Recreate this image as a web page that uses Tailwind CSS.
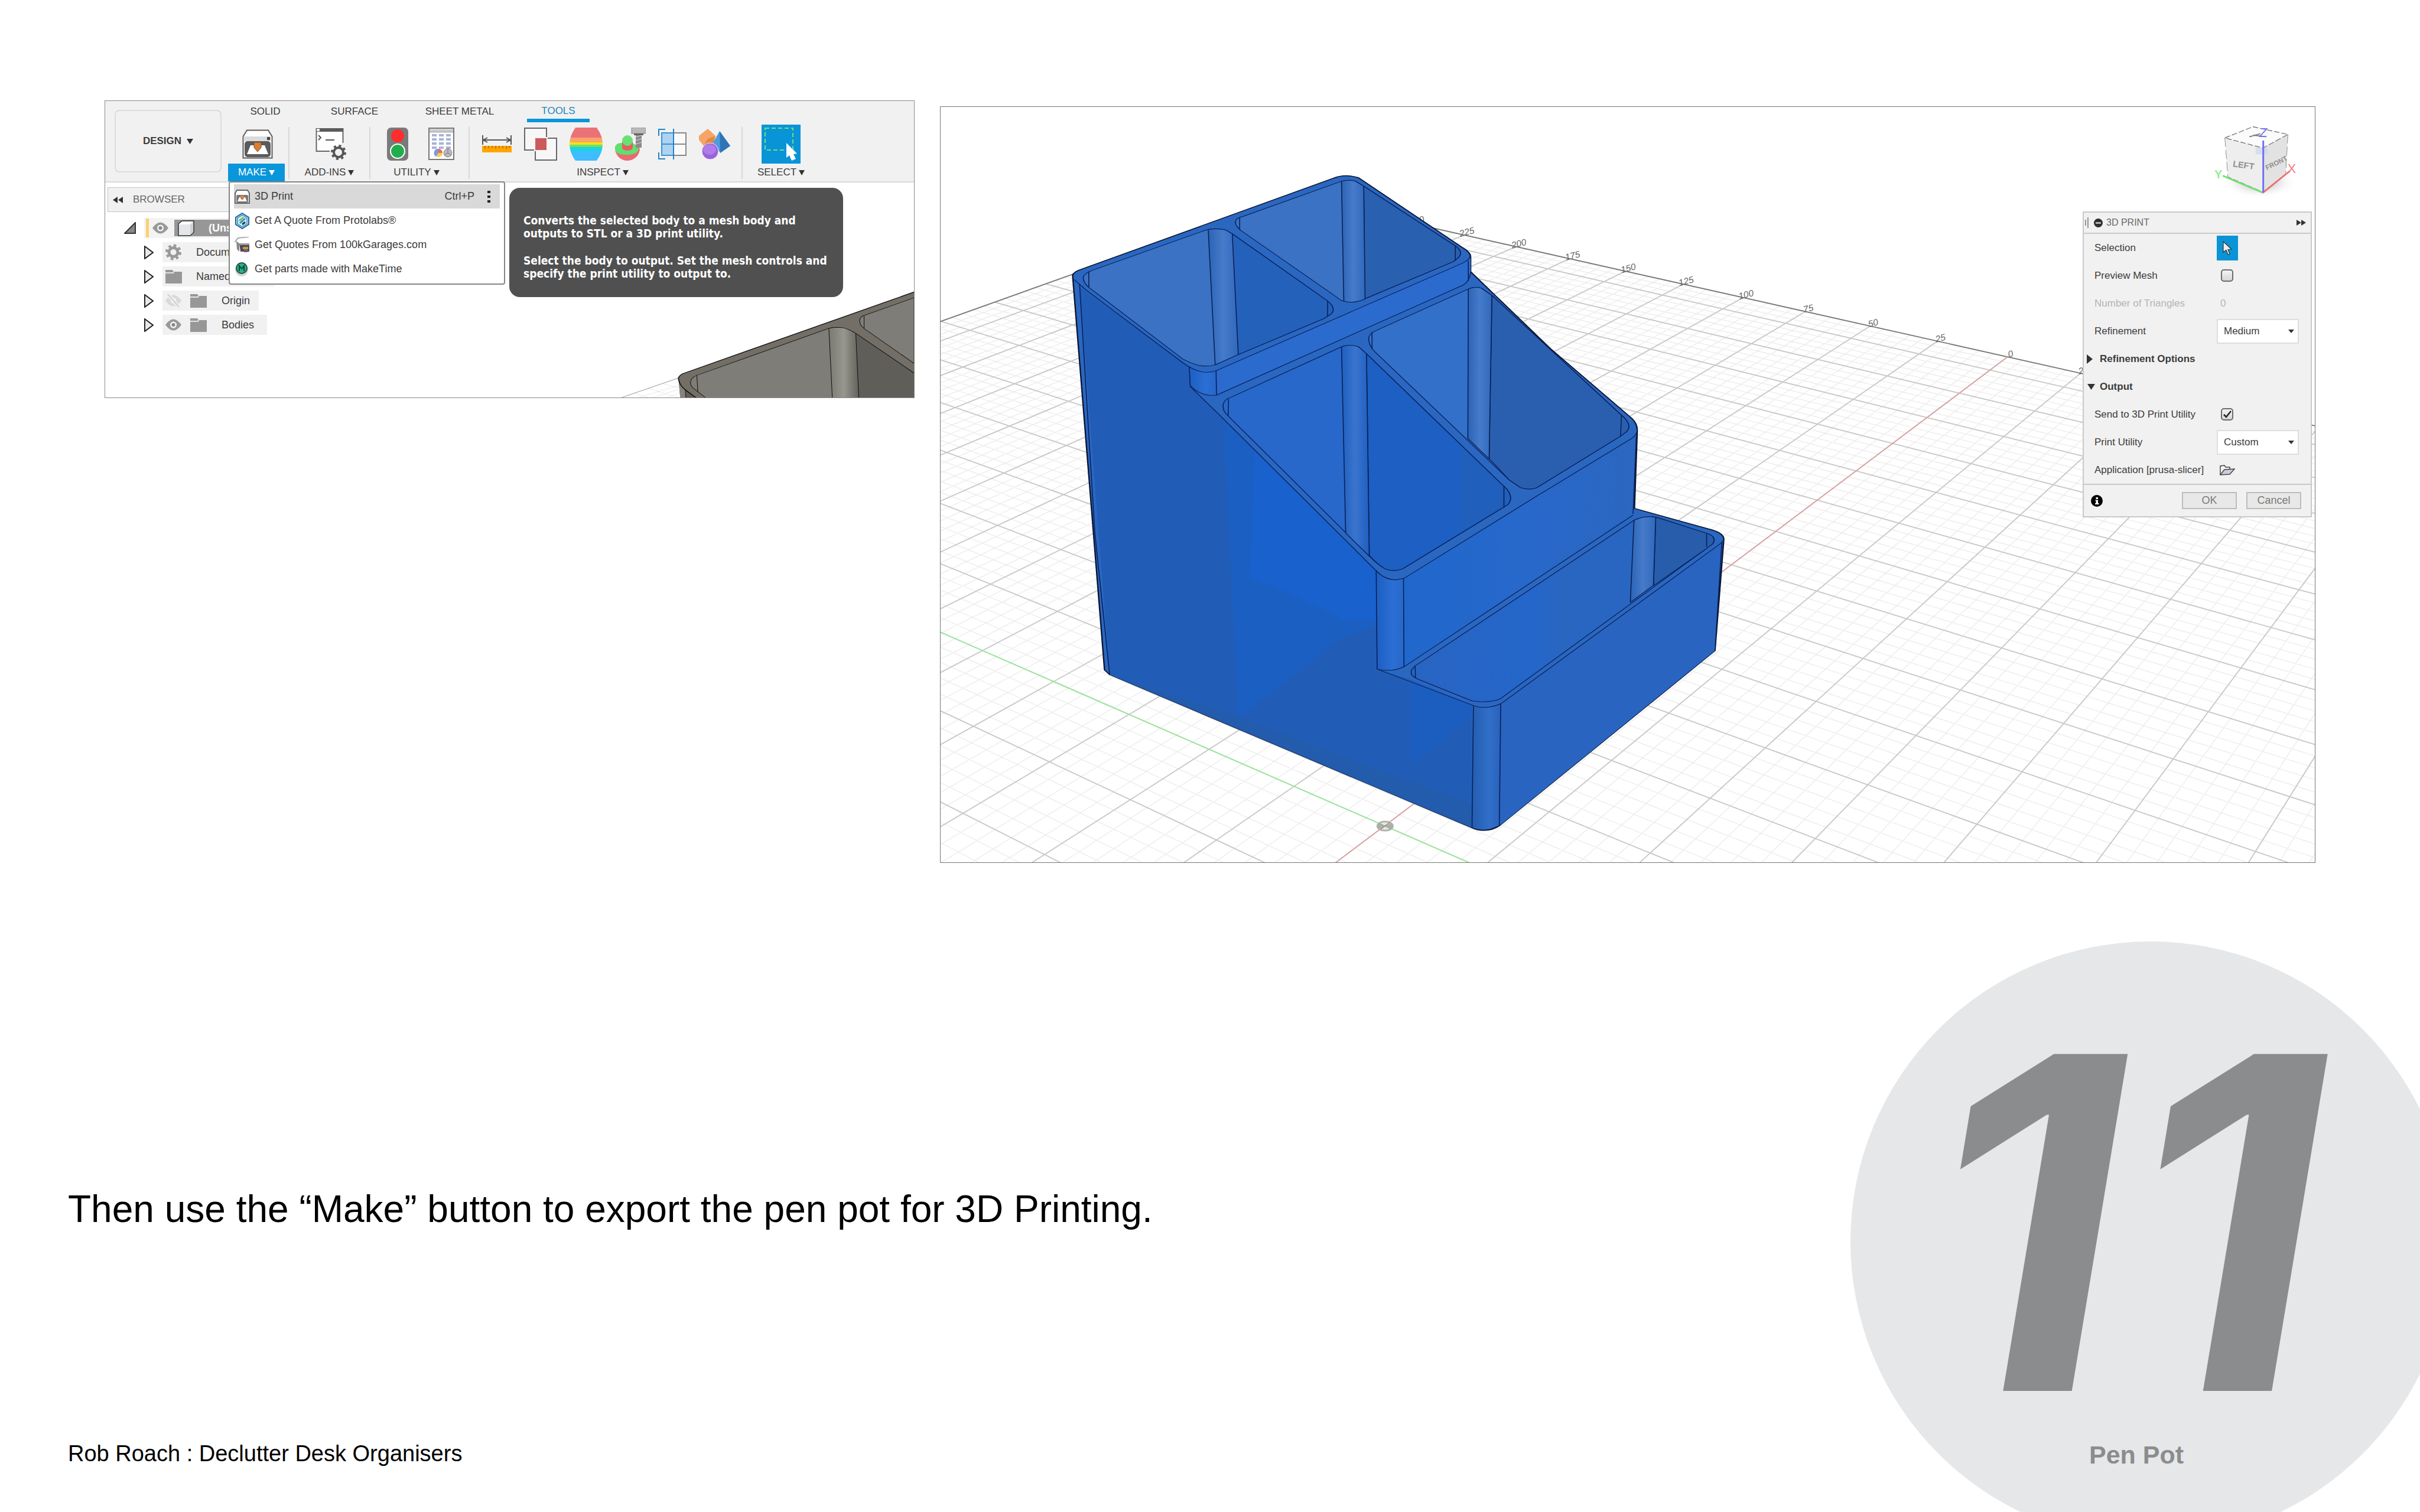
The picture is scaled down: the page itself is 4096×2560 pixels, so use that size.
<!DOCTYPE html>
<html lang="en">
<head>
  <meta charset="UTF-8" />
  <meta name="viewport" content="width=device-width, initial-scale=1.0" />
  <title>Declutter Desk Organisers - Pen Pot</title>
  <script src="https://cdn.jsdelivr.net/npm/@tailwindcss/browser@4"></script>
</head>
<body class="bg-white text-black font-['Liberation_Sans',sans-serif]">
  <div class="relative min-h-screen flex flex-col overflow-hidden">

    <!-- Step number -->
    <div class="absolute -right-[52px] -bottom-[50px] size-[1016px] rounded-full bg-[#e6e7e9] text-[#8b8c8e] flex flex-col items-center pt-[126px] pr-[48px]">
      <div class="pr-[44px] font-['Inter',sans-serif] font-bold italic text-[784px] leading-[700px]">11</div>
      <div class="mt-[19px] text-[43px] leading-[48px] font-bold">Pen Pot</div>
    </div>

    <main class="relative flex items-start gap-[43px] px-[177px] pt-[170px]">

      <!-- Make menu -->
      <section class="relative flex-[1370] min-w-0 aspect-[1370/504] border border-[#8a8a8a] overflow-hidden bg-white text-[#3c3c3c]">
        <svg class="absolute inset-0 size-full" viewBox="232 221 1783 656" preserveAspectRatio="none">
          <defs>
            <linearGradient id="greyPost">
              <stop offset="0" stop-color="#7b7970" /><stop offset=".5" stop-color="#96978f" /><stop offset="1" stop-color="#62615b" />
            </linearGradient>
          </defs>
          <g transform="translate(1340 600) scale(.4464 .3333)" stroke="#111" stroke-width="3" stroke-linejoin="round">
            <path d="M200 770L350 832M270 738L355 768M130 802L200 832M150 832L350 750M220 832L352 775M290 832L354 802" fill="none" stroke="#d8d8d8" stroke-width="2" />
            <path d="M65 832L350 700" fill="none" stroke="#888" />
            <path d="M1513 130L370 672Q345 690 350 712L358 832H1513Z" fill="#736f66" stroke="none" />
            <path d="M350 712Q355 750 382 778L436 832H358Z" fill="#85847c" stroke="none" />
            <path d="M383 780L386 832H436Z" fill="#5f5e58" />
            <path d="M484 832L420 765Q400 735 415 705Q425 690 442 682L1088 373Q1115 360 1160 367Q1190 375 1225 405L1513 668V832Z" fill="#7e7d77" />
            <path d="M1225 405L1513 668V832H1240Z" fill="#5f5e58" stroke="none" />
            <path d="M1092 372Q1115 362 1160 367Q1190 375 1225 405L1240 832H1109Z" fill="url(#greyPost)" />
            <path d="M1225 405L1513 668" fill="none" />
            <path d="M1513 168L1262 288Q1240 300 1245 330Q1248 355 1268 374L1513 604Z" fill="#7e7d77" />
            <path d="M1266 288V372M440 682L445 795" fill="none" />
            <path d="M1513 130L370 672Q345 690 350 712Q355 750 382 778L436 832" fill="none" stroke-width="5" />
          </g>
        </svg>

        <!-- Toolbar -->
        <header class="relative h-[138px] flex bg-[#f1f1f1] border-b-2 border-[#d9d9d9] pl-[16px]">
          <button class="mt-[15px] w-[181px] h-[106px] shrink-0 rounded-lg border-2 border-[#dcdcdc] text-[17px] font-bold flex items-center justify-center gap-[9px]">DESIGN
            <svg width="11" height="9" viewBox="0 0 11 9"><path d="M0 0h11L5.500 9z" fill="#333" /></svg>
          </button>
          <div class="ml-[11px]">
            <nav class="flex h-[36px] text-[17px] leading-[34px]">
              <button class="w-[126px]">SOLID</button>
              <button class="w-[176px]">SURFACE</button>
              <button class="w-[180px]">SHEET METAL</button>
              <button class="ml-[24px] w-[106px] text-[#1a87c0] border-b-6 border-[#0a96da] leading-[34px] h-[36px]">TOOLS</button>
            </nav>
            <div class="flex mt-[3px] text-[17px] leading-[30px]">
              <div class="w-[96px]">
                <div class="h-[67px] flex items-center justify-center pl-[4px]">
                  <svg width="52" height="50" viewBox="0 0 52 50">
                    <path d="M8 1.500H44L50.500 12V48.500H1.500V12Z" fill="#fff" stroke="#5c5c5c" stroke-width="2" />
                    <path d="M2.500 12H49.500V20H2.500Z" fill="#dcdcdc" /><rect x="42" y="13" width="5" height="5" fill="#444" />
                    <rect x="4" y="20" width="44" height="27" rx="5" fill="#5b5b5b" />
                    <path d="M8 42L14 27H38L44 42Z" fill="#fff" />
                    <path d="M20 22H32V31L26 38L20 31Z" fill="#e07b2a" stroke="#5b5b5b" stroke-width="1" />
                  </svg>
                </div>
                <button class="w-full h-[30px] bg-[#0a96da] text-white flex items-center justify-center gap-[4px]">MAKE
                  <svg width="10" height="9" viewBox="0 0 10 9"><path d="M0 0h10L5 9z" fill="#fff" /></svg>
                </button>
              </div>
              <div class="w-[2px] h-[88px] mt-[5px] mx-[6px] bg-[#d8d8d8]"></div>
              <div class="w-[123px]">
                <div class="h-[67px] flex items-center justify-center pl-[4px]">
                  <svg width="52" height="55" viewBox="0 0 52 55" fill="none">
                    <path d="M24 40H1.500V2H46.500V26" fill="#fff" stroke="#666" stroke-width="2" />
                    <rect x="1" y="1" width="46" height="6" fill="#5c5c5c" /><rect x="2" y="2" width="5" height="4" fill="#eee" />
                    <path d="M5 13L9 17L5 21M17 21H32" stroke="#555" stroke-width="2" />
                    <circle cx="39" cy="42" r="8" fill="#f1f1f1" stroke="#555" stroke-width="4" />
                    <circle cx="39" cy="42" r="11" stroke="#555" stroke-width="4" stroke-dasharray="4 4.640" />
                  </svg>
                </div>
                <button class="w-full flex items-center justify-center gap-[4px]">ADD-INS
                  <svg width="10" height="9" viewBox="0 0 10 9"><path d="M0 0h10L5 9z" fill="#333" /></svg>
                </button>
              </div>
              <div class="w-[2px] h-[88px] mt-[5px] mx-[6px] bg-[#d8d8d8]"></div>
              <div class="w-[154px]">
                <div class="h-[67px] flex items-center justify-center gap-[34px] pl-[4px]">
                  <svg width="36" height="56" viewBox="0 0 36 56">
                    <rect width="36" height="56" rx="7" fill="#7a7a7a" />
                    <circle cx="18" cy="14" r="11" fill="#ff2d2d" /><circle cx="18" cy="40" r="12" fill="#1fae4b" stroke="#fff" stroke-width="2" />
                  </svg>
                  <svg width="44" height="55" viewBox="0 0 44 55">
                    <rect x="1" y="1" width="42" height="53" fill="#fff" stroke="#777" stroke-width="2" />
                    <path d="M2 4.500H42" stroke="#c9c9c9" stroke-width="4" /><path d="M1 7.500H43" stroke="#777" />
                    <path d="M6 13H38M6 20H38M6 27H38M6 34H38" stroke="#a9b3d6" stroke-width="4" stroke-dasharray="8 4" />
                    <circle cx="17" cy="43" r="7" fill="#f2d34a" /><path d="M17 43V36A7 7 0 0 1 24 43Z" fill="#e66" /><path d="M17 43L13 49A7 7 0 0 1 17 36Z" fill="#7a9be0" />
                    <circle cx="33" cy="43" r="7" fill="#bbb" stroke="#888" /><path d="M33 43V36M33 43L39 47M33 43L27 47" stroke="#777" />
                  </svg>
                </div>
                <button class="w-full flex items-center justify-center gap-[4px] pr-[10px]">UTILITY
                  <svg width="10" height="9" viewBox="0 0 10 9"><path d="M0 0h10L5 9z" fill="#333" /></svg>
                </button>
              </div>
              <div class="w-[2px] h-[88px] mt-[5px] mx-[6px] bg-[#d8d8d8]"></div>
              <div class="w-[448px]">
                <div class="h-[67px] flex items-center justify-between pl-[15px] pr-[12px]">
                  <svg width="50" height="30" viewBox="0 0 50 30" fill="none">
                    <path d="M1 0V16M49 0V16M2 8H48M9 4L2 8L9 12M41 4L48 8L41 12" stroke="#555" stroke-width="2" />
                    <rect y="18" width="50" height="11" fill="#ffa500" />
                    <path d="M5 18V23M11 18V22M17 18V22M23 18V23M29 18V22M35 18V22M41 18V23M46 18V22" stroke="#7a5200" />
                  </svg>
                  <svg width="56" height="56" viewBox="0 0 56 56" fill="none" stroke="#666" stroke-width="2">
                    <rect x="19" y="18" width="36" height="37" fill="#f7f7f7" /><rect x="1" y="1" width="37" height="37" fill="#f7f7f7" />
                    <rect x="18" y="17" width="21" height="22" fill="#cc5a5a" stroke="#f4f4f4" />
                  </svg>
                  <svg width="56" height="56" viewBox="0 0 56 56">
                    <clipPath id="barrel"><path d="M10 0H46Q66 28 46 56H10Q-10 28 10 0Z" /></clipPath>
                    <g clip-path="url(#barrel)">
                      <rect width="56" height="18" fill="#ea7277" /><rect y="17" width="56" height="8" fill="#fca469" />
                      <rect y="25" width="56" height="4" fill="#f5e313" /><rect y="29" width="56" height="4" fill="#6be06b" />
                      <rect y="33" width="56" height="7" fill="#1bd3e3" /><rect y="40" width="56" height="16" fill="#40bcff" />
                    </g>
                  </svg>
                  <svg width="52" height="56" viewBox="0 0 52 56">
                    <path d="M0 34A21 21 0 0 0 42 36Q36 28 30 28H6Q0 30 0 34Z" fill="#ea6a70" />
                    <path d="M0 36Q0 26 10 26H30L40 36Q38 46 20 46Q0 46 0 36Z" fill="#5fe06f" />
                    <path d="M12 24V34A9 5 0 0 0 30 34V24Z" fill="#e85c60" />
                    <circle cx="21" cy="22" r="9" fill="#68e274" />
                    <rect x="35" y="10" width="10" height="24" fill="#8a8a8a" /><path d="M35 16L45 13M35 22L45 19M35 28L45 25" stroke="#ddd" />
                    <rect x="28" width="24" height="10" fill="#b9b9b9" stroke="#888" /><rect x="32" y="10" width="16" height="3" fill="#666" />
                  </svg>
                  <svg width="48" height="52" viewBox="0 0 48 52" fill="none" stroke-width="2">
                    <rect x="26" y="7" width="21" height="38" fill="#fafafa" stroke="#888" /><path d="M26 26H47" stroke="#888" />
                    <rect x="6" y="7" width="20" height="38" fill="#add3f1" stroke="#3b95d2" /><path d="M6 26H26" stroke="#3b95d2" />
                    <path d="M26 0V52M12 1H1V12M12 51H1V40" stroke="#1c86cc" />
                  </svg>
                  <svg width="54" height="54" viewBox="0 0 54 54">
                    <path d="M15 1L28 13L24 27L8 30L0 20V13Z" fill="#f6a468" /><path d="M15 18L28 13L24 27L8 30Z" fill="#e58744" />
                    <path d="M35 5L53 30L36 42L24 24Z" fill="#4f9bdc" /><path d="M35 5L53 30L36 42Z" fill="#2f74b6" />
                    <ellipse cx="19" cy="39" rx="14" ry="14" fill="#9a62dd" stroke="#f1f1f1" /><ellipse cx="18" cy="36" rx="11" ry="9" fill="#b07ce8" />
                  </svg>
                </div>
                <button class="w-full flex items-center justify-center gap-[4px] pr-[10px]">INSPECT
                  <svg width="10" height="9" viewBox="0 0 10 9"><path d="M0 0h10L5 9z" fill="#333" /></svg>
                </button>
              </div>
              <div class="w-[2px] h-[88px] mt-[5px] mx-[6px] bg-[#d8d8d8]"></div>
              <div class="w-[118px]">
                <div class="h-[67px] flex items-center justify-center">
                  <svg width="66" height="66" viewBox="0 0 66 66">
                    <rect width="66" height="66" fill="#0a94d8" />
                    <rect x="6" y="6" width="47" height="37" fill="none" stroke="#6fe07f" stroke-width="2" stroke-dasharray="7 4" />
                    <path d="M42 31L60 49L54 50L58 58L51 61L47 52L42 56Z" fill="#fff" />
                  </svg>
                </div>
                <button class="w-full flex items-center justify-center gap-[4px]">SELECT
                  <svg width="10" height="9" viewBox="0 0 10 9"><path d="M0 0h10L5 9z" fill="#333" /></svg>
                </button>
              </div>
            </div>
          </div>
        </header>

        <!-- Browser tree -->
        <div class="relative text-[18px] whitespace-nowrap">
          <div class="ml-[4px] mt-[8px] w-[300px] h-[42px] bg-[#f1f1f1] border border-[#c4c4c4] flex items-center gap-[17px] pl-[8px] text-[17px] text-[#666]">
            <svg width="17" height="11" viewBox="0 0 17 11"><path d="M8 0V11L0 5.500ZM17 0V11L9 5.500Z" fill="#333" /></svg>
            BROWSER
          </div>
          <ul class="mt-[10px] flex flex-col gap-[7px] items-start">
            <li class="flex items-center h-[34px] pl-[32px]">
              <svg width="20" height="20" viewBox="0 0 20 20"><path d="M1 19L19 1V19Z" fill="#888" stroke="#333" stroke-width="2" /></svg>
              <div class="ml-[14px] h-[34px] w-[220px] bg-[#f3f3f3] flex items-center pl-[3px]">
                <span class="w-[5px] h-[32px] bg-[#fbd071]"></span>
                <svg class="ml-[6px]" width="27" height="20" viewBox="0 0 27 20"><path d="M0 10Q13.500 -9 27 10Q13.500 29 0 10Z" fill="#999" /><circle cx="13.500" cy="10" r="5.500" fill="#f3f3f3" /><circle cx="13.500" cy="10" r="3" fill="#888" /></svg>
                <div class="ml-[10px] flex-1 h-[28px] bg-[#979797] flex items-center pl-[6px] gap-[24px] text-white font-bold">
                  <svg class="shrink-0" width="28" height="27" viewBox="0 0 28 27"><path d="M1 6L7 1H27V20L21 26H1Z" fill="#fff" stroke="#333" stroke-width="1.500" /><path d="M2 7H21V25H2Z" fill="#e4e6ea" /><path d="M21 7L26 2V20L21 25Z" fill="#cfd1d5" /></svg>
                  (Unsaved)
                </div>
              </div>
            </li>
            <li class="flex items-center h-[34px] pl-[66px]">
              <svg width="16" height="23" viewBox="0 0 16 23"><path d="M1 1L15 11.500L1 22Z" fill="#e8e8e8" stroke="#222" stroke-width="2" /></svg>
              <div class="ml-[15px] h-full w-[190px] bg-[#f1f1f1] flex items-center pl-[4px] gap-[24px]">
                <svg class="shrink-0" width="29" height="28" viewBox="0 0 29 28" fill="none"><circle cx="14.500" cy="14" r="7.500" stroke="#999" stroke-width="5" /><circle cx="14.500" cy="14" r="11.500" stroke="#999" stroke-width="4" stroke-dasharray="4.500 4.530" /></svg>
                Document Settings
              </div>
            </li>
            <li class="flex items-center h-[34px] pl-[66px]">
              <svg width="16" height="23" viewBox="0 0 16 23"><path d="M1 1L15 11.500L1 22Z" fill="#e8e8e8" stroke="#222" stroke-width="2" /></svg>
              <div class="ml-[15px] h-full w-[190px] bg-[#f1f1f1] flex items-center pl-[5px] gap-[24px]">
                <svg class="shrink-0" width="28" height="23" viewBox="0 0 28 23"><path d="M0 0H12L14 3H28V23H0Z" fill="#979797" /><path d="M0 5H13L15 2" stroke="#e3e3e3" stroke-width="2" fill="none" /></svg>
                Named Views
              </div>
            </li>
            <li class="flex items-center h-[34px] pl-[66px]">
              <svg width="16" height="23" viewBox="0 0 16 23"><path d="M1 1L15 11.500L1 22Z" fill="#e8e8e8" stroke="#222" stroke-width="2" /></svg>
              <div class="ml-[15px] h-full w-[163px] bg-[#f1f1f1] flex items-center pl-[5px]">
                <svg width="27" height="22" viewBox="0 0 27 22"><path d="M0 11Q13.500 -8 27 11Q13.500 30 0 11Z" fill="#d9d9d9" /><circle cx="13.500" cy="11" r="5" fill="#f1f1f1" /><path d="M4 0L23 22" stroke="#f1f1f1" stroke-width="6" /><path d="M4 0L23 22" stroke="#d0d0d0" stroke-width="2" /></svg>
                <svg class="ml-[15px] mr-[25px]" width="28" height="23" viewBox="0 0 28 23"><path d="M0 0H12L14 3H28V23H0Z" fill="#979797" /><path d="M0 5H13L15 2" stroke="#e3e3e3" stroke-width="2" fill="none" /></svg>
                Origin
              </div>
            </li>
            <li class="flex items-center h-[34px] pl-[66px]">
              <svg width="16" height="23" viewBox="0 0 16 23"><path d="M1 1L15 11.500L1 22Z" fill="#e8e8e8" stroke="#222" stroke-width="2" /></svg>
              <div class="ml-[15px] h-full w-[177px] bg-[#f1f1f1] flex items-center pl-[5px]">
                <svg width="27" height="20" viewBox="0 0 27 20"><path d="M0 10Q13.500 -9 27 10Q13.500 29 0 10Z" fill="#999" /><circle cx="13.500" cy="10" r="5.500" fill="#f3f3f3" /><circle cx="13.500" cy="10" r="3" fill="#888" /></svg>
                <svg class="ml-[15px] mr-[25px]" width="28" height="23" viewBox="0 0 28 23"><path d="M0 0H12L14 3H28V23H0Z" fill="#979797" /><path d="M0 5H13L15 2" stroke="#e3e3e3" stroke-width="2" fill="none" /></svg>
                Bodies
              </div>
            </li>
          </ul>
        </div>

        <!-- Open menu -->
        <div class="absolute left-[209px] top-[136px] w-[468px] bg-white border-2 border-[#858585] rounded px-[7px] pt-[3px] pb-[4px] text-[18px]">
          <button class="w-full h-[41px] bg-[#d9d9d9] flex items-center pl-px">
            <svg width="26" height="24" viewBox="0 0 26 24"><path d="M4 1H22L25 6V23H1V6Z" fill="#fff" stroke="#666" stroke-width="2" /><rect x="3" y="9" width="20" height="13" rx="2" fill="#777" /><path d="M5 20L8 13H18L21 20Z" fill="#fff" /><path d="M10 10H16V15L13 18L10 15Z" fill="#cf8350" /></svg>
            <span class="ml-[8px]">3D Print</span>
            <span class="ml-auto">Ctrl+P</span>
            <svg class="ml-[22px] mr-[16px]" width="5" height="20" viewBox="0 0 5 20"><path d="M0 0h5v4H0zM0 8h5v4H0zM0 16h5v4H0z" fill="#222" /></svg>
          </button>
          <button class="w-full h-[41px] flex items-center pl-px gap-[8px]">
            <svg width="26" height="28" viewBox="0 0 26 28"><path d="M13 1L24 8V20L13 27L2 20V8Z" fill="#d8eefc" stroke="#2a5f8f" stroke-width="2" /><path d="M13 4L21 9V19L13 24L5 19V9Z" fill="none" stroke="#3fa4e0" stroke-width="2" /><path d="M8 14L15 8" stroke="#8bbf3a" stroke-width="3" /><path d="M9 18L18 10" stroke="#2b8fd0" stroke-width="3" /><path d="M13 20L18 16" stroke="#333" stroke-width="3" /></svg>
            Get A Quote From Protolabs®
          </button>
          <button class="w-full h-[41px] flex items-center pl-px gap-[8px]">
            <svg width="26" height="27" viewBox="0 0 26 27"><path d="M0 9L6 2L24 0" fill="none" stroke="#aaa" stroke-width="2" /><path d="M3 7L8 11V25L4 21Z" fill="#888" /><path d="M8 11H25V25H10Z" fill="#4e4a52" /><path d="M8 11H25V14H8Z" fill="#999" /><rect x="14" y="17" width="9" height="4" fill="#c39a3a" /><rect x="16" y="21" width="6" height="5" fill="#705a8c" /></svg>
            Get Quotes From 100kGarages.com
          </button>
          <button class="w-full h-[41px] flex items-center pl-px gap-[8px]">
            <svg width="26" height="24" viewBox="0 0 26 24"><circle cx="12" cy="13" r="11" fill="#d6d6d6" /><circle cx="12" cy="10" r="9" fill="#28b48c" stroke="#1c5548" stroke-width="2" /><path d="M8 15V6L12 11L16 6V15" fill="none" stroke="#163f36" stroke-width="2" /></svg>
            Get parts made with MakeTime
          </button>
        </div>

        <!-- Tooltip -->
        <div class="absolute left-[684px] top-[147px] w-[565px] h-[185px] rounded-[18px] bg-[#505050] text-white pl-[24px] pt-[44px] font-['DejaVu_Sans_Condensed','DejaVu_Sans',sans-serif] font-bold text-[19px] leading-[22px] flex flex-col gap-[24px]">
          <p>Converts the selected body to a mesh body and<br />outputs to STL or a 3D print utility.</p>
          <p>Select the body to output. Set the mesh controls and<br />specify the print utility to output to.</p>
        </div>
      </section>

      <!-- Model viewport -->
      <section class="relative flex-[2328] min-w-0 mt-[10px] aspect-[2328/1281] border border-[#777] overflow-hidden bg-white text-[#3c3c3c]">
        <svg class="absolute inset-0 size-full" viewBox="2072 235 3030 1667" preserveAspectRatio="none">
          <defs>
            <linearGradient id="post"><stop offset="0" stop-color="#2c63b5" /><stop offset=".5" stop-color="#467bca" /><stop offset="1" stop-color="#2f68bc" /></linearGradient>
            <linearGradient id="postDeep"><stop offset="0" stop-color="#205fbf" /><stop offset=".5" stop-color="#3a74ce" /><stop offset="1" stop-color="#1f5fc0" /></linearGradient>
            <linearGradient id="corner"><stop offset="0" stop-color="#1c5fc2" /><stop offset=".6" stop-color="#2b6fd4" /><stop offset="1" stop-color="#2767c8" /></linearGradient>
            <linearGradient id="cornerLow"><stop offset="0" stop-color="#245db0" /><stop offset=".6" stop-color="#316fc9" /><stop offset="1" stop-color="#2863bd" /></linearGradient>
            <linearGradient id="frontWall"><stop offset="0" stop-color="#2067cc" /><stop offset=".5" stop-color="#2768cb" /><stop offset="1" stop-color="#2c67c0" /></linearGradient>
            <linearGradient id="trayWall"><stop offset="0" stop-color="#2965c2" /><stop offset=".4" stop-color="#2466ca" /><stop offset=".5" stop-color="#2966c1" /><stop offset="1" stop-color="#2966c1" /></linearGradient>
            <radialGradient id="shadow"><stop offset="0" stop-color="#999" /><stop offset="1" stop-color="#fff" stop-opacity="0" /></radialGradient>
          </defs>

          <!-- Ground grid -->
          <g fill="none">
            <path id="gridMinor" stroke="#eeeeee" stroke-width="2" />
            <path id="gridMajor" stroke="#c9c9c9" stroke-width="2.500" />
            <path id="gridEdge" stroke="#777" stroke-width="2.500" />
            <path id="axisX" stroke="#dd9c9c" stroke-width="2" />
            <path id="axisY" stroke="#9be89b" stroke-width="2.500" />
          </g>
          <g id="gridLabels" fill="#666" font-size="20" font-style="italic" text-anchor="middle" font-family="Liberation Sans, sans-serif"></g>
          <g>
            <ellipse cx="3052" cy="1822" rx="17" ry="10" fill="#e6e8e6" stroke="#b3b5b3" stroke-width="4" />
            <path d="M3052 1822L3038 1815Q3032 1822 3038 1829ZM3052 1822L3066 1815Q3072 1822 3066 1829Z" fill="#a9b0a9" />
            <path d="M3040 1816L3064 1828" stroke="#7cc97c" stroke-width="2" /><path d="M3042 1829L3062 1814" stroke="#b77" stroke-width="2" />
          </g>

          <!-- Pen pot -->
          <g transform="translate(2060 230) scale(1.0204 .6378)" stroke="#0a1f55" stroke-width="2" stroke-linejoin="round" fill="none">
            <path stroke="#0b1430" stroke-width="3" fill="#2a67c1" d="M297 590Q300 578 315 570L860 255Q885 238 915 253L1140 495Q1158 512 1157 530V578L1330 845L1505 1085Q1518 1105 1517 1130L1511 1397L1680 1472Q1705 1485 1704 1505L1685 1889L1220 2494Q1205 2511 1185 2511Q1172 2511 1160 2502L377 1972L366 1956Z" />
            <path stroke="none" fill="#215db6" d="M312 630L548 905L551 975L612 1070L920 1560L953 1610L955 1953L1030 1991L1160 2077V2502L377 1972Z" />
            <g stroke="none">
              <path fill="#1c5fc2" d="M622 1085L920 1560L953 1610L955 1800L870 1850Q800 1950 655 2120L640 1640Z" />
              <path fill="#1861cf" d="M690 1195L920 1560L953 1610V1785L880 1780Q760 1680 680 1640Z" opacity=".75" />
              <path fill="#1c5fc2" d="M1028 1990L1160 2077V2110Q1100 2200 1028 2280Z" opacity=".8" />
              <path fill="#28599f" d="M377 1972L640 2110L1160 2420V2502Z" opacity=".35" />
            </g>
            <path d="M312 620L345 1480L377 1972" />

            <!-- top tier -->
            <path stroke="none" fill="#2b6bce" d="M549 905Q580 935 608 920L1140 545L1157 530V580Q1155 610 1140 625L608 1005Q575 1008 551 972Z" />
            <path stroke="none" fill="url(#corner)" d="M549 905Q580 928 607 920V1005Q575 1008 551 972Z" />
            <path d="M549 905L551 972Q575 1012 608 1005L1140 625Q1155 612 1157 580M607 920L608 1005M1152 540V610" />
            <path d="M300 605L325 640L535 893Q575 940 608 920L1140 548Q1157 535 1157 518" />
            <path fill="#3b72c3" d="M320 600Q320 585 340 573L585 434Q605 425 628 434L642 447L847 678Q868 705 855 725L840 740L655 865L605 900Q580 912 552 893L535 880L332 632Q320 615 320 600Z" />
            <path stroke="none" fill="#2461bb" d="M642 447L847 678Q868 705 855 725L840 740L655 865Z" />
            <path fill="url(#post)" d="M590 432Q610 427 628 434L642 447L655 865L605 900Z" />
            <path d="M332 577V632M848 678V733M642 447L847 678Q868 705 855 725L840 740L655 865" />
            <path fill="#3b72c3" d="M649 405Q650 392 665 387L878 265Q893 258 908 265L926 282L1125 490Q1142 510 1130 530L1120 543L928 672Q905 690 878 678L858 655L662 437Q648 420 649 405Z" />
            <path fill="#2a60b0" d="M926 282L1125 490Q1142 510 1130 530L1120 543L928 672Z" />
            <path fill="url(#post)" d="M878 265Q893 258 908 265L926 282L929 672Q905 690 883 680Z" />
            <path d="M658 392V433M1124 490V540" />

            <!-- middle tier -->
            <path stroke="none" fill="url(#frontWall)" d="M1013 1639L1515 1148L1508 1412L1013 1946Z" />
            <path d="M1515 1148L1508 1416" />
            <path fill="#2768ca" d="M622 1045Q622 1020 640 1012L875 840Q893 827 915 838L932 862L1235 1330Q1250 1360 1238 1383L1228 1393L1010 1606Q990 1618 972 1606Q955 1590 940 1565L635 1080Q622 1062 622 1045Z" />
            <path fill="#1d5fc3" d="M932 862L1235 1330Q1250 1360 1238 1383L1228 1393L1010 1606Q990 1618 972 1606Q955 1590 938 1560Z" />
            <path stroke="none" fill="#225fb9" d="M1135 1178L1233 1330Q1248 1360 1236 1383L1135 1481Z" opacity=".8" />
            <path fill="url(#postDeep)" d="M878 838Q893 827 915 838L932 862L938 1562L887 1482Z" />
            <path d="M634 1018L633 1078M1229 1318V1392" />
            <path fill="#3370c9" d="M937 805Q940 790 955 780L1152 638Q1165 628 1180 635L1203 660L1490 1085Q1505 1110 1495 1130L1480 1148L1300 1325Q1285 1335 1265 1325L1240 1298L950 855Q935 830 937 805Z" />
            <path fill="#2a5fb0" d="M1203 660L1490 1085Q1505 1110 1495 1130L1480 1148L1300 1325Q1285 1335 1265 1325L1240 1298L1197 1224Z" />
            <path fill="url(#post)" d="M1152 638Q1165 628 1180 635L1203 660L1197 1226L1151 1155Z" />
            <path d="M944 787V845M1483 1075L1481 1147" />
            <path d="M551 975L612 1070L920 1560Q950 1610 965 1630Q990 1652 1013 1639L1290 1364L1505 1155Q1518 1142 1517 1120" />
            <path fill="url(#corner)" d="M953 1612Q970 1644 995 1644L1012 1639L1013 1945Q985 1965 955 1953Z" />

            <!-- front tray -->
            <path stroke="none" fill="#2964c0" d="M1222 2075L1700 1515L1685 1889L1220 2494Z" />
            <path fill="url(#trayWall)" d="M1510 1438Q1535 1420 1560 1428L1667 1483Q1690 1495 1680 1520L1665 1538L1220 2057Q1195 2071 1160 2063L1045 1989Q1023 1975 1030 1954L1037 1942Z" />
            <path fill="#285dac" d="M1557 1427L1667 1483Q1690 1495 1680 1520L1665 1538L1552 1664Z" />
            <path fill="url(#post)" d="M1510 1438Q1535 1420 1557 1428L1552 1663L1502 1722Z" />
            <path d="M1667 1483V1530M1037 1942L1038 1983M1508 1420L1013 1945" />
            <path d="M955 1953L1160 2077Q1185 2097 1222 2073L1700 1515" />
            <path fill="url(#cornerLow)" d="M1163 2079Q1190 2095 1222 2073L1219 2494Q1190 2520 1160 2502Z" />
            <path d="M1700 1510L1685 1889" />
          </g>

          <!-- View cube -->
          <g transform="translate(4570 240) scale(.3444 .5869)" fill="none">
            <ellipse cx="1190" cy="275" rx="240" ry="60" fill="url(#shadow)" />
            <path d="M968 108L1148 66L1372 95L1212 146Z" fill="#fbfbfb" />
            <path d="M968 108L1212 146V312L988 255Z" fill="#eeeeee" />
            <path d="M1212 146L1372 95L1358 240L1212 312Z" fill="#e2e2e2" />
            <path d="M968 108L1148 66L1372 95L1212 146ZM968 108L988 255L1212 312M1372 95L1358 240" stroke="#777" stroke-width="3" stroke-dasharray="34 12" />
            <path d="M1165 145H1240V170H1165Z" fill="#c9d4f2" opacity=".6" />
            <path d="M955 250L1212 314" stroke="#71e071" stroke-width="7" />
            <path d="M1212 314L1385 232" stroke="#f06a6a" stroke-width="7" />
            <path d="M1214 118V314" stroke="#6f6ff5" stroke-width="11" />
            <path d="M1125 104L1195 92M1150 98L1235 104" stroke="#777" stroke-width="4" />
          </g>
          <g font-family="Liberation Sans, sans-serif" text-anchor="middle" font-weight="bold">
            <text x="4945" y="370" font-size="19" fill="#8f8f8f" transform="rotate(8 4945 362)">LEFT</text>
            <text x="5016" y="364" font-size="15" fill="#8f8f8f" transform="rotate(-26 5016 357)">FRONT</text>
            <text x="4988" y="302" font-size="28" font-style="italic" font-weight="normal" fill="#7272f0">Z</text>
            <text x="4889" y="393" font-size="26" fill="#93f093">Y</text>
            <text x="5051" y="381" font-size="28" font-weight="normal" fill="#f27a7a">X</text>
          </g>
        </svg>

        <!-- 3D print dialog -->
        <form class="absolute right-[5px] top-[177px] w-[388px] bg-[#f1f1f1] border-2 border-[#c9c9c9] text-[17px]" onsubmit="return false">
          <div class="h-[36px] border-b-2 border-[#c9c9c9] flex items-center pl-[2px] pr-[8px] text-[16px] text-[#6b6b6b]">
            <svg width="6" height="18" viewBox="0 0 6 18"><path d="M1 4V14M5 0V18" stroke="#777" stroke-width="1.500" /></svg>
            <svg class="ml-[9px] mr-[6px]" width="15" height="15" viewBox="0 0 15 15"><circle cx="7.500" cy="7.500" r="7.500" fill="#2f2f2f" /><path d="M3 7.500H12" stroke="#f1f1f1" stroke-width="2" /></svg>
            3D PRINT
            <svg class="ml-auto" width="16" height="10" viewBox="0 0 16 10"><path d="M0 0L8 5L0 10ZM8 0L16 5L8 10Z" fill="#333" /></svg>
          </div>
          <div class="grid grid-cols-[225px_1fr] auto-rows-[47px] items-center">
            <span class="pl-[18px]">Selection</span>
            <button type="button" aria-label="Selection" class="w-[36px] h-[42px] bg-[#0a94d8] flex items-center justify-center">
              <svg width="16" height="24" viewBox="0 0 16 24"><path d="M1 1L15 14L9 14.500L12 22L9 23L6 15.500L1 19Z" fill="#eee" stroke="#333" stroke-width="1.200" /></svg>
            </button>

            <label for="preview" class="pl-[18px]">Preview Mesh</label>
            <input id="preview" type="checkbox" class="ml-[7px] appearance-none size-[21px] rounded-[5px] border-2 border-[#6c6c6c] bg-linear-to-b from-[#f4f4f4] to-[#d6d6d6]" />

            <span class="pl-[18px] text-[#b4b4b4]">Number of Triangles</span>
            <span class="pl-[6px] text-[#b4b4b4]">0</span>

            <label for="refinement" class="pl-[18px]">Refinement</label>
            <span class="relative w-[139px]">
              <select id="refinement" class="appearance-none w-full h-[42px] bg-white border-2 border-[#dedede] pl-[10px]"><option>Medium</option></select>
              <svg class="absolute right-[8px] top-[18px]" width="10" height="6" viewBox="0 0 10 6"><path d="M0 0H10L5 6Z" fill="#333" /></svg>
            </span>

            <button type="button" class="col-span-2 flex items-center pl-[5px] font-bold">
              <svg class="mr-[12px]" width="10" height="16" viewBox="0 0 10 16"><path d="M0 0L10 8L0 16Z" fill="#333" /></svg>Refinement Options
            </button>
            <button type="button" class="col-span-2 flex items-center pl-[6px] font-bold">
              <svg class="mr-[8px]" width="13" height="10" viewBox="0 0 13 10"><path d="M0 0H13L6.500 10Z" fill="#333" /></svg>Output
            </button>

            <label for="send" class="pl-[18px]">Send to 3D Print Utility</label>
            <span class="relative flex">
              <input id="send" type="checkbox" checked class="ml-[7px] appearance-none size-[21px] rounded-[5px] border-2 border-[#6c6c6c] bg-linear-to-b from-[#f4f4f4] to-[#d6d6d6]" />
              <svg class="absolute left-[11px] top-[4px] pointer-events-none" width="14" height="13" viewBox="0 0 14 13"><path d="M1 7L5 11L13 1" fill="none" stroke="#222" stroke-width="2.500" /></svg>
            </span>

            <label for="utility" class="pl-[18px]">Print Utility</label>
            <span class="relative w-[139px]">
              <select id="utility" class="appearance-none w-full h-[42px] bg-white border-2 border-[#dedede] pl-[10px]"><option>Custom</option></select>
              <svg class="absolute right-[8px] top-[18px]" width="10" height="6" viewBox="0 0 10 6"><path d="M0 0H10L5 6Z" fill="#333" /></svg>
            </span>

            <span class="pl-[18px]">Application [prusa-slicer]</span>
            <button type="button" aria-label="Browse" class="ml-[5px] w-[26px]">
              <svg width="26" height="18" viewBox="0 0 26 18"><path d="M1 17V2L8 1L10 4H17V7" fill="#f5f5f5" stroke="#444" stroke-width="1.500" /><path d="M1 17L8 8L25 7L17 16Z" fill="#c8cdd6" stroke="#444" stroke-width="1.500" /></svg>
            </button>
          </div>
          <div class="h-[55px] border-t-2 border-[#c9c9c9] flex items-center gap-[16px] pl-[12px] pr-[16px] text-[18px] text-[#7a7a7a]">
            <svg class="mr-auto" width="20" height="20" viewBox="0 0 20 20"><circle cx="10" cy="10" r="10" fill="#000" /><path d="M8.500 4H12V7H8.500ZM7.500 8.500H12V14H13.500V16H7V14H8.500V10H7.500Z" fill="#fff" /></svg>
            <button class="w-[93px] h-[29px] bg-[#e8e8e8] border-2 border-[#bdbdbd] leading-[25px]">OK</button>
            <button type="button" class="w-[93px] h-[29px] bg-[#e8e8e8] border-2 border-[#bdbdbd] leading-[25px]">Cancel</button>
          </div>
        </form>
      </section>
    </main>

    <p class="relative mt-[546px] ml-[115px] text-[64px] leading-[80px]">Then use the “Make” button to export the pen pot for 3D Printing.</p>
    <footer class="relative mt-auto ml-[115px] pb-[75px] text-[38px] leading-[48px]">Rob Roach : Declutter Desk Organisers</footer>
  </div>

  <script>
    // one unit is a 25 mm square, far corner at (13.6, 12.6)
    const U = 13.6, V = 12.6;

    function project(u, v) {
      const w = 1 + 0.04341 * u + 0.0325 * v;
      const x = 3051 + (160.6 * u - 206.1 * v) / w;
      const y = 1821.3 - (121 * u + 89.9 * v) / w;
      return [x.toFixed(1), y.toFixed(1)];
    }

    function line(u1, v1, u2, v2) {
      return "M" + project(u1, v1).join(" ") + "L" + project(u2, v2).join(" ");
    }

    let minor = "", major = "";
    for (let i = -25; i < 68; i++) {
      const d = line(i / 5, -V, i / 5, V);
      if (i % 5 === 0) major += d; else minor += d;
    }
    for (let i = -63; i < 63; i++) {
      const d = line(-5, i / 5, U, i / 5);
      if (i % 5 === 0) major += d; else minor += d;
    }
    document.getElementById("gridMinor").setAttribute("d", minor);
    document.getElementById("gridMajor").setAttribute("d", major);
    document.getElementById("gridEdge").setAttribute("d", line(U, -V, U, V) + line(-5, V, U, V));
    document.getElementById("axisX").setAttribute("d", line(-5, 0, U, 0));
    document.getElementById("axisY").setAttribute("d", line(0, -V, 0, V));

    // distance labels on the far edge
    const labels = document.getElementById("gridLabels");
    for (let k = -1; k < 11; k++) {
      const [x, y] = project(U, k).map(Number);
      const t = document.createElementNS("http://www.w3.org/2000/svg", "text");
      t.setAttribute("transform", "translate(" + (x + 8) + " " + y + ") rotate(-14)");
      t.textContent = Math.abs(k * 25);
      labels.appendChild(t);
    }
  </script>
</body>
</html>
